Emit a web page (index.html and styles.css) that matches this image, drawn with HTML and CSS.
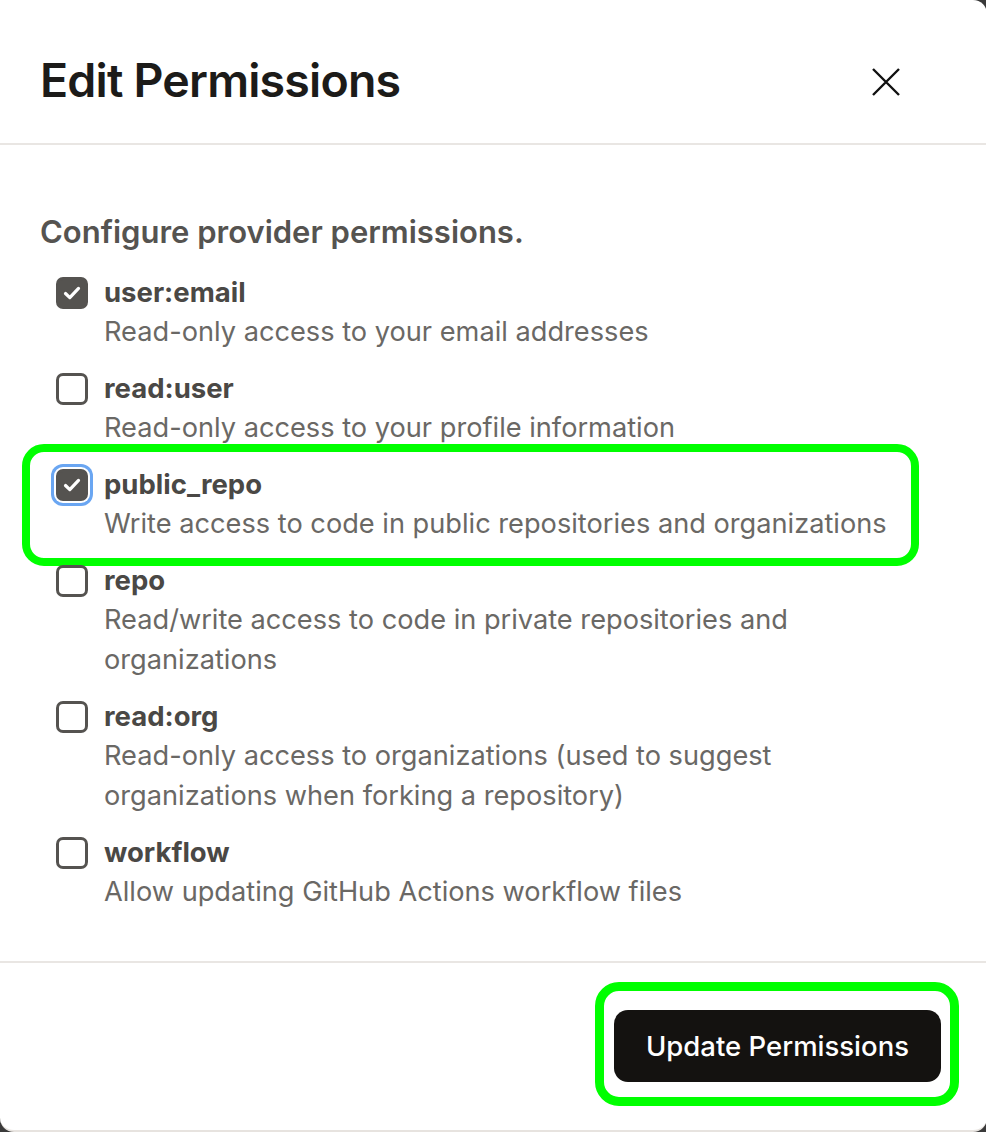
FILE: index.html
```html
<!DOCTYPE html>
<html lang="en">
<head>
<meta charset="utf-8">
<title>Edit Permissions</title>
<link rel="stylesheet" href="styles.css">
</head>
<body>
<div class="modal">
  <header class="modal-header">
    <h1 class="modal-title">Edit Permissions</h1>
    <button class="close-btn" aria-label="Close">
      <svg width="28" height="28" viewBox="0 0 28 28"><path d="M1 1 L27 27 M27 1 L1 27" stroke="#111" stroke-width="2.4" fill="none"/></svg>
    </button>
  </header>
  <section class="modal-body">
    <h2 class="section-title">Configure provider permissions.</h2>
    <ul class="perm-list">
      <li class="perm">
        <span class="box checked"><svg viewBox="0 0 26 26"><path d="M6.5 13.5 L10.8 17.6 L19.5 8.4" stroke="#fff" stroke-width="3.2" fill="none" stroke-linecap="round" stroke-linejoin="round"/></svg></span>
        <span class="perm-name">user:email</span>
        <span class="perm-desc">Read-only access to your email addresses</span>
      </li>
      <li class="perm">
        <span class="box"></span>
        <span class="perm-name">read:user</span>
        <span class="perm-desc">Read-only access to your profile information</span>
      </li>
      <li class="perm highlight">
        <span class="box checked focused"><svg viewBox="0 0 26 26"><path d="M6.5 13.5 L10.8 17.6 L19.5 8.4" stroke="#fff" stroke-width="3.2" fill="none" stroke-linecap="round" stroke-linejoin="round"/></svg></span>
        <span class="perm-name">public_repo</span>
        <span class="perm-desc">Write access to code in public repositories and organizations</span>
      </li>
      <li class="perm">
        <span class="box"></span>
        <span class="perm-name">repo</span>
        <span class="perm-desc">Read/write access to code in private repositories and organizations</span>
      </li>
      <li class="perm">
        <span class="box"></span>
        <span class="perm-name">read:org</span>
        <span class="perm-desc">Read-only access to organizations (used to suggest organizations when forking a repository)</span>
      </li>
      <li class="perm">
        <span class="box"></span>
        <span class="perm-name">workflow</span>
        <span class="perm-desc">Allow updating GitHub Actions workflow files</span>
      </li>
    </ul>
  </section>
  <footer class="modal-footer">
    <div class="btn-wrap">
      <button class="primary-btn">Update Permissions</button>
    </div>
  </footer>
</div>
</body>
</html>
```

FILE: styles.css
```css
* { box-sizing: border-box; }
html, body { margin: 0; padding: 0; }
body {
  background: #3a3a3a;
  font-family: Inter, "Noto Sans", "Liberation Sans", sans-serif;
  width: 986px;
  height: 1132px;
  overflow: hidden;
}
.modal {
  width: 987px;
  height: 1132px;
  background: #fff;
  border-radius: 0 14px 14px 14px;
  border-bottom: 2px solid #e7e3df;
  display: flex;
  flex-direction: column;
  overflow: hidden;
}
.modal-header {
  display: flex;
  align-items: center;
  justify-content: space-between;
  padding: 52px 85px 35px 40px;
  border-bottom: 2px solid #e9e6e3;
}
.modal-title {
  margin: 0;
  font-size: 46.5px;
  line-height: 56px;
  font-weight: 600;
  letter-spacing: -0.8px;
  color: #1c1b19;
}
.close-btn {
  width: 32px;
  height: 32px;
  padding: 2px;
  margin-top: 4px;
  border: 0;
  background: none;
  display: flex;
}
.modal-body {
  padding: 67px 60px 49px 40px;
  border-bottom: 2px solid #e9e6e3;
}
.section-title {
  margin: 0 0 20px 0;
  font-size: 31px;
  line-height: 40px;
  font-weight: 600;
  color: #555350;
}
.perm-list {
  list-style: none;
  margin: 0;
  padding: 0 0 0 16px;
  display: flex;
  flex-direction: column;
  gap: 16px;
}
.perm {
  display: grid;
  grid-template-columns: 32px 1fr;
  column-gap: 16px;
  position: relative;
}
.box {
  grid-row: 1;
  grid-column: 1;
  width: 32px;
  height: 32px;
  margin-top: 5px;
  border: 3px solid #555350;
  border-radius: 7px;
  background: #fff;
  display: flex;
}
.box.checked {
  background: #555350;
  border-color: #555350;
}
.box svg { width: 26px; height: 26px; }
.box.focused {
  box-shadow: 0 0 0 2px #fff, 0 0 0 5px #6aa6f2;
}
.perm-name {
  grid-row: 1;
  grid-column: 2;
  font-size: 27.5px;
  line-height: 40px;
  font-weight: 700;
  color: #4a4845;
}
.perm-desc {
  grid-row: 2;
  grid-column: 2;
  font-size: 27.2px;
  line-height: 40px;
  font-weight: 400;
  color: #6a6865;
}
.highlight::after {
  content: "";
  position: absolute;
  top: -20px;
  bottom: -22px;
  left: -34px;
  right: 8px;
  border: 8px solid #00ff00;
  border-radius: 22px;
  pointer-events: none;
}
.modal-footer {
  display: flex;
  justify-content: flex-end;
  padding: 47px 46px 0 0;
}
.btn-wrap { position: relative; }
.btn-wrap::after {
  content: "";
  position: absolute;
  top: -28px;
  bottom: -24px;
  left: -19px;
  right: -18px;
  border: 9px solid #00ff00;
  border-radius: 24px;
  pointer-events: none;
}
.primary-btn {
  width: 327px;
  height: 72px;
  border: 0;
  border-radius: 14px;
  background: #141210;
  color: #fff;
  font-family: Inter, "Noto Sans", sans-serif;
  font-size: 27.5px;
  font-weight: 500;
}
```
